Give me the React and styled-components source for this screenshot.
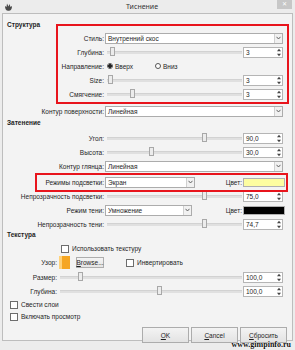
import styled, { createGlobalStyle } from 'styled-components';

const Global = createGlobalStyle`
    html, body {
        margin: 0;
        padding: 0;
        background: #f4f4f4;
    }
    body {
        font-family: "Liberation Sans", Arial, sans-serif;
        font-size: 6.5px;
        color: #1e1e1e;
    }
`;

function Chevron() {
    return (
        <svg width="5" height="4" viewBox="0 0 5 4">
            <path d="M0.5 0.8 L2.5 3 L4.5 0.8" fill="none" stroke="#555" strokeWidth="0.9" />
        </svg>
    );
}

function Combo({ value, width }) {
    return (
        <ComboBox $w={width}>
            <span>{value}</span>
            <ComboArrow>
                <Chevron />
            </ComboArrow>
        </ComboBox>
    );
}

function Spin({ value }) {
    return (
        <SpinBox>
            <span>{value}</span>
            <SpinArrows>
                <svg width="4" height="9" viewBox="0 0 4 9">
                    <path d="M0 3.2 L2 0.8 L4 3.2 Z" fill="#444" />
                    <path d="M0 5.8 L2 8.2 L4 5.8 Z" fill="#444" />
                </svg>
            </SpinArrows>
        </SpinBox>
    );
}

function SliderRow({ label, w, at, value }) {
    return (
        <Row>
            <Label $w={w}>{label}</Label>
            <Track>
                <Thumb style={{ left: at }} />
            </Track>
            <Spin value={value} />
        </Row>
    );
}

export default function App() {
    return (
        <>
            <Global />
            <Page>
                <TitleBar>
                    <AppIcon>
                        <svg width="9" height="8" viewBox="0 0 9 8">
                            <path d="M1 3 Q1 8 4.5 7.8 Q8 8 8 3 L6.5 4 L5.5 1 L4.5 3.5 L3 0.5 L2.5 4 Z" fill="#4a4a4a" />
                        </svg>
                    </AppIcon>
                    <Title>Тиснение</Title>
                    <CloseBtn>✕</CloseBtn>
                </TitleBar>
                <Client>
                    <Section $pt={2}>Структура</Section>
                    <RedBox $mt={-8} $ml={53} $mr={-4} $pt={5} $pr={2}>
                        <Row>
                            <Label $w={46}>Стиль:</Label>
                            <Combo value="Внутренний скос" />
                        </Row>
                        <SliderRow label="Глубина:" w={46} at={3} value="3" />
                        <Row>
                            <Label $w={46}>Направление:</Label>
                            <Radio $on>Вверх</Radio>
                            <Radio>Вниз</Radio>
                        </Row>
                        <SliderRow label="Size:" w={46} at={1} value="3" />
                        <SliderRow label="Смягчение:" w={46} at={23} value="3" />
                    </RedBox>
                    <Row>
                        <Label $w={101}>Контур поверхности:</Label>
                        <Combo value="Линейная" />
                    </Row>
                    <Section $pt={1}>Затенение</Section>
                    <SliderRow label="Угол:" w={101} at={95} value="90,0" />
                    <SliderRow label="Высота:" w={101} at={42} value="30,0" />
                    <Row>
                        <Label $w={101}>Контур глянца:</Label>
                        <Combo value="Линейная" />
                    </Row>
                    <RedBox $ml={32} $mr={-3} $mb={-3} $pt={0} $pr={1}>
                        <Row>
                            <Label $w={67}>Режимы подсветки:</Label>
                            <Combo value="Экран" width={90} />
                            <ColorLabel>Цвет:</ColorLabel>
                            <Swatch $c="#fdfda0" />
                        </Row>
                    </RedBox>
                    <SliderRow label="Непрозрачность подсветки:" w={101} at={95} value="75,0" />
                    <Row>
                        <Label $w={101}>Режим тени:</Label>
                        <Combo value="Умножение" width={87} />
                        <ColorLabel>Цвет:</ColorLabel>
                        <Swatch $c="#000" />
                    </Row>
                    <SliderRow label="Непрозрачность тени:" w={101} at={95} value="74,7" />
                    <Section $h={11}>Текстура</Section>
                    <CheckRow $ml={58} $h={13}>
                        <Check />
                        Использовать текстуру
                    </CheckRow>
                    <Row $h={15}>
                        <Label $w={54}>Узор:</Label>
                        <Pattern />
                        <SmallButton>
                            <u>B</u>rowse...
                        </SmallButton>
                        <CheckRow $ml={22} $h={14}>
                            <Check />
                            Инвертировать
                        </CheckRow>
                    </Row>
                    <SliderRow label="Размер:" w={54} at={18} value="100,0" />
                    <SliderRow label="Глубина:" w={54} at={97} value="100,0" />
                    <CheckRow $ml={7} $h={13}>
                        <Check />
                        Свести слои
                    </CheckRow>
                    <CheckRow $ml={7} $h={11}>
                        <Check />
                        Включать просмотр
                    </CheckRow>
                    <Buttons>
                        <Button>
                            <u>O</u>K
                        </Button>
                        <Button>
                            <u>C</u>ancel
                        </Button>
                        <Button>
                            <u>С</u>бросить
                        </Button>
                    </Buttons>
                </Client>
                <Watermark>www.gimpinfo.ru</Watermark>
            </Page>
        </>
    );
}

const Page = styled.div`
    position: relative;
    width: 295px;
    height: 350px;
    background: #ececec;
    padding: 0 2px;
    box-sizing: border-box;
    overflow: hidden;
`;

const TitleBar = styled.div`
    height: 13px;
    display: flex;
    align-items: center;
`;

const AppIcon = styled.div`
    width: 9px;
    height: 9px;
    margin-left: 2px;
    display: flex;
    align-items: center;
`;

const Title = styled.div`
    flex: 1;
    text-align: center;
    font-family: "Noto Sans", sans-serif;
    font-size: 7px;
    color: #333;
    padding-right: 6px;
`;

const CloseBtn = styled.div`
    width: 15px;
    height: 9px;
    align-self: flex-start;
    background: #c7c7c7;
    color: #fff;
    font-size: 6px;
    line-height: 9px;
    text-align: center;
    margin-right: 1px;
`;

const Client = styled.div`
    background: #f3f3f3;
    border: 1px solid #bdbdbd;
    height: 328px;
    box-sizing: border-box;
    display: flex;
    flex-direction: column;
    padding: 5px 7px 0 0;
`;

const Section = styled.div`
    font-weight: bold;
    height: ${(p) => p.$h || 13}px;
    box-sizing: border-box;
    padding: ${(p) => p.$pt || 0}px 0 0 4px;
    line-height: 8px;
    flex-shrink: 0;
`;

const RedBox = styled.div`
    border: 2px solid #e8141c;
    margin: ${(p) => p.$mt || 0}px ${(p) => p.$mr}px ${(p) => p.$mb || 0}px ${(p) => p.$ml}px;
    padding: ${(p) => p.$pt}px ${(p) => p.$pr}px 1px 0;
    display: flex;
    flex-direction: column;
    flex-shrink: 0;
    position: relative;
    z-index: 1;
`;

const Row = styled.div`
    display: flex;
    align-items: center;
    height: ${(p) => p.$h || 14}px;
    flex-shrink: 0;
`;

const Label = styled.div`
    width: ${(p) => p.$w}px;
    text-align: right;
    padding-right: 1px;
    flex-shrink: 0;
    white-space: nowrap;
`;

const ComboBox = styled.div`
    display: flex;
    align-items: center;
    height: 11px;
    box-sizing: border-box;
    border: 1px solid #acacac;
    background: #fff;
    padding-left: 2px;
    ${(p) => (p.$w ? `width: ${p.$w}px;` : 'flex: 1; margin-right: 2px;')}
    span {
        flex: 1;
    }
`;

const ComboArrow = styled.div`
    width: 7px;
    height: 9px;
    border-left: 1px solid #d0d0d0;
    background: #f1f1f1;
    display: flex;
    align-items: center;
    justify-content: center;
`;

const Track = styled.div`
    position: relative;
    flex: 1;
    height: 2px;
    margin: 0 1px 0 2px;
    background: #e0e0e0;
    border-top: 1px solid #d2d2d2;
`;

const Thumb = styled.div`
    position: absolute;
    top: -5px;
    width: 5px;
    height: 9px;
    box-sizing: border-box;
    border: 1px solid #a8a8a8;
    background: #ececec;
`;

const SpinBox = styled.div`
    width: 40px;
    height: 11px;
    margin-right: 2px;
    box-sizing: border-box;
    border: 1px solid #b5b5b5;
    background: #fff;
    display: flex;
    align-items: center;
    padding-left: 2px;
    span {
        flex: 1;
    }
`;

const SpinArrows = styled.div`
    width: 5px;
    display: flex;
    align-items: center;
`;

const Radio = styled.div`
    display: flex;
    align-items: center;
    margin-left: 2px;
    width: 46px;
    &::before {
        content: '';
        width: 6px;
        height: 6px;
        box-sizing: border-box;
        border-radius: 50%;
        border: 1px solid #555;
        background: ${(p) =>
            p.$on ? 'radial-gradient(circle, #222 0 1.6px, #fff 1.8px)' : '#fff'};
        margin-right: 2px;
    }
`;

const ColorLabel = styled.div`
    flex: 1;
    text-align: right;
    padding-right: 1px;
`;

const Swatch = styled.div`
    width: 42px;
    height: 9px;
    box-sizing: border-box;
    border: 1px solid #b0b0b0;
    background: ${(p) => p.$c};
`;

const CheckRow = styled.div`
    display: flex;
    align-items: center;
    height: ${(p) => p.$h || 15}px;
    margin-left: ${(p) => p.$ml}px;
    flex-shrink: 0;
`;

const Check = styled.div`
    width: 6px;
    height: 6px;
    border: 1px solid #6d6d6d;
    background: #fff;
    margin-right: 3px;
`;

const Pattern = styled.div`
    width: 11px;
    height: 13px;
    margin-left: 1px;
    background: linear-gradient(90deg, #ffd27a 0 3px, #f5a623 3px);
`;

const SmallButton = styled.div`
    margin-left: 6px;
    width: 28px;
    height: 11px;
    box-sizing: border-box;
    border: 1px solid #adadad;
    background: linear-gradient(#f4f4f4, #e4e4e4);
    display: flex;
    align-items: center;
    justify-content: center;
`;

const Buttons = styled.div`
    display: flex;
    justify-content: flex-end;
    gap: 2px;
    margin: 5px -2px 0 0;
`;

const Button = styled.div`
    width: 47px;
    height: 16px;
    box-sizing: border-box;
    border: 1px solid #acacac;
    background: linear-gradient(#f3f3f3, #e3e3e3);
    display: flex;
    align-items: center;
    justify-content: center;
`;

const Watermark = styled.div`
    position: absolute;
    right: 4px;
    bottom: 1px;
    font-family: "Liberation Serif", serif;
    font-weight: bold;
    font-size: 8px;
    color: #111;
    text-shadow: 0 0 1px #fff, 0 0 1px #fff;
`;
